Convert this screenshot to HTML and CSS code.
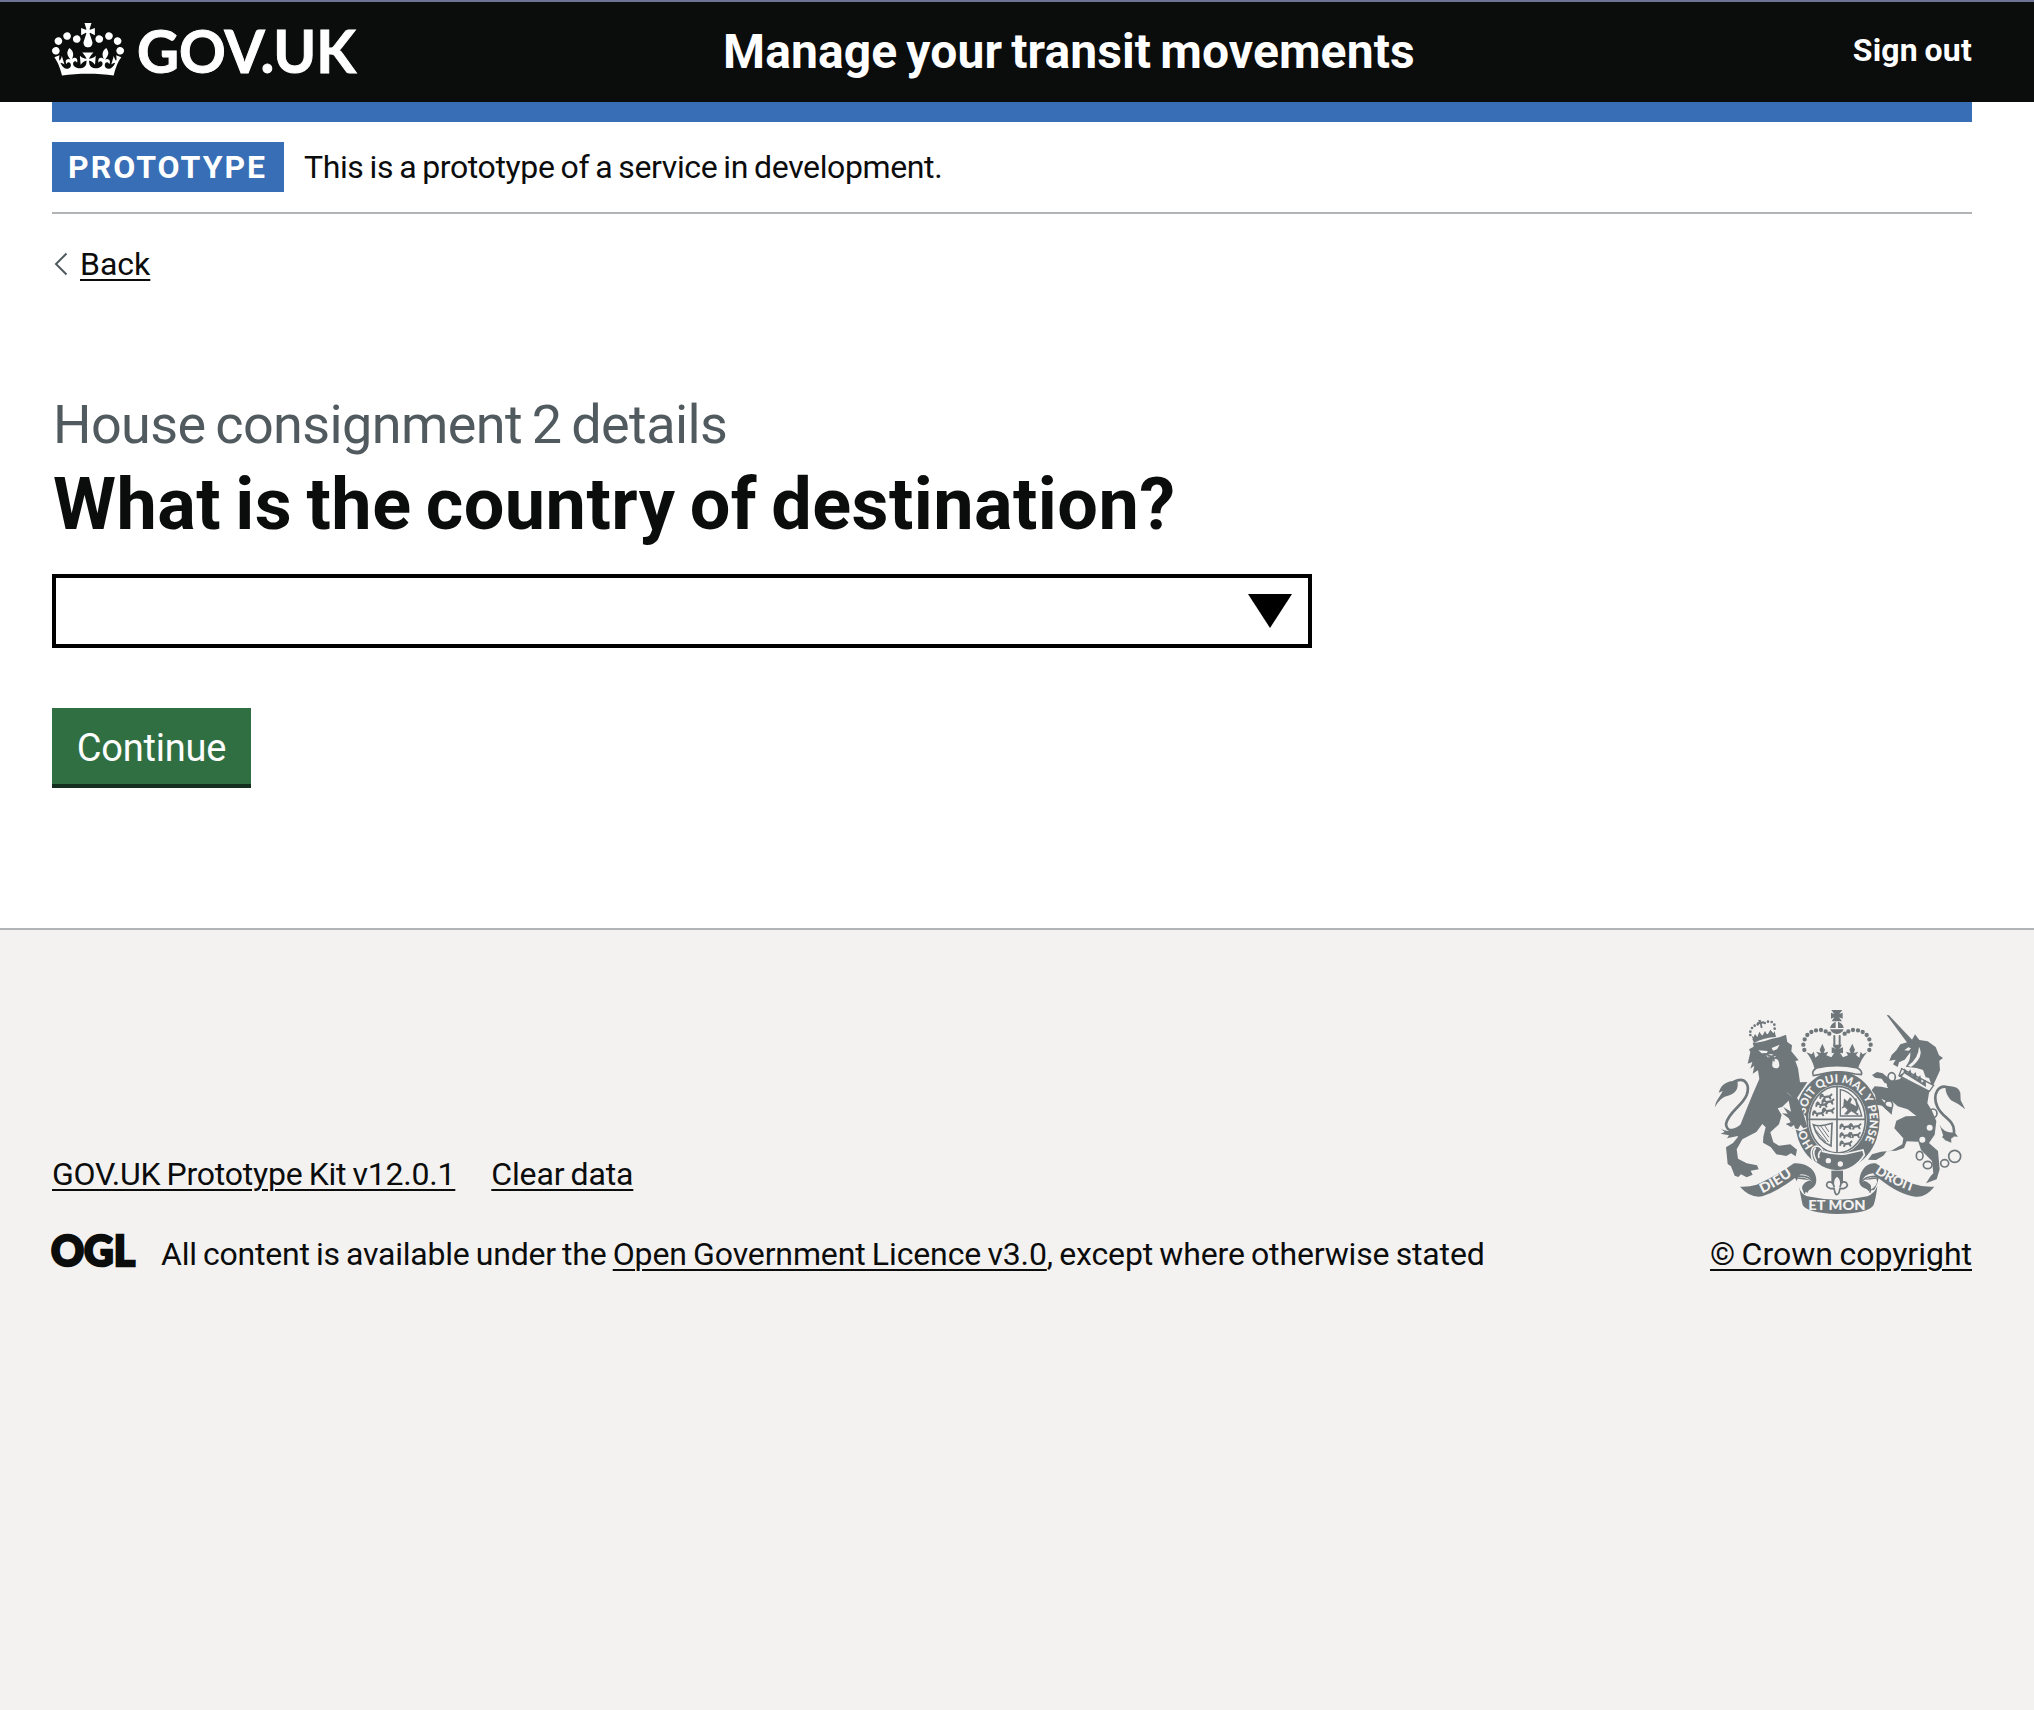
FILE: index.html
```html
<!DOCTYPE html>
<html lang="en">
<head>
<meta charset="utf-8">
<title>What is the country of destination? - Manage your transit movements</title>
<link rel="stylesheet" href="styles.css">
</head>
<body>
<header class="header">
  <div class="header-inner">
    <a class="logo" href="#" aria-label="GOV.UK">
      <svg class="crown" viewBox="0 0 132 97" width="72" height="53" aria-hidden="true"><path fill="currentColor" fill-rule="evenodd" d="M25 30.2c3.5 1.5 7.7-.2 9.1-3.7 1.5-3.6-.2-7.8-3.9-9.2-3.6-1.4-7.6.3-9.1 3.9-1.4 3.5.3 7.5 3.9 9zM9 39.5c3.6 1.5 7.8-.2 9.2-3.7 1.5-3.6-.2-7.8-3.9-9.1-3.6-1.5-7.6.2-9.1 3.8-1.4 3.5.3 7.5 3.8 9zM4.4 57.2c3.5 1.5 7.7-.2 9.1-3.8 1.5-3.6-.2-7.7-3.9-9.1-3.5-1.5-7.6.3-9.1 3.8-1.4 3.5.3 7.6 3.9 9.1zm38.3-21.4c3.5 1.5 7.7-.2 9.1-3.8 1.5-3.6-.2-7.7-3.9-9.1-3.6-1.5-7.6.3-9.1 3.8-1.3 3.6.4 7.7 3.9 9.1zm64.4-5.6c-3.6 1.5-7.8-.2-9.1-3.7-1.5-3.6.2-7.8 3.8-9.2 3.6-1.4 7.7.3 9.2 3.9 1.3 3.5-.4 7.5-3.9 9zm15.9 9.3c-3.6 1.5-7.7-.2-9.1-3.7-1.5-3.6.2-7.8 3.7-9.1 3.6-1.5 7.7.2 9.2 3.8 1.5 3.5-.3 7.5-3.8 9zm4.7 17.7c-3.6 1.5-7.8-.2-9.2-3.8-1.5-3.6.2-7.7 3.9-9.1 3.6-1.5 7.7.3 9.2 3.8 1.3 3.5-.4 7.6-3.9 9.1zM89.3 35.8c-3.6 1.5-7.8-.2-9.2-3.8-1.4-3.6.2-7.7 3.9-9.1 3.6-1.5 7.7.3 9.2 3.8 1.4 3.6-.3 7.7-3.9 9.1zM69.7 17.7l8.9 4.7V9.3l-8.9 2.8c-.2-.3-.5-.6-.9-.9L72.4 0H59.6l3.5 11.2c-.3.3-.6.5-.9.9l-8.8-2.8v13.1l8.8-4.7c.3.3.6.7.9.9l-5 15.4v.1c-.2.8-.4 1.6-.4 2.4 0 4.1 3.1 7.5 7 8.1h.2c.3 0 .7.1 1 .1.4 0 .7 0 1-.1h.2c4-.6 7.1-4.1 7.1-8.1 0-.8-.1-1.7-.4-2.4V34l-5.1-15.4c.4-.2.7-.6 1-.9zM66 92.8c16.9 0 32.8 1.1 47.1 3.2 4-16.9 8.9-26.7 14-33.5l-9.6-3.4c1 4.9 1.1 7.2 0 10.2-1.5-1.4-3-4.3-4.2-8.7L108.6 76c2.8-2 5-3.2 7.5-3.3-4.4 9.4-10 11.9-13.6 11.2-4.3-.8-6.3-4.6-5.6-7.9 1-4.7 5.7-5.9 8-.5 4.3-8.7-3-11.4-7.6-8.8 7.1-7.2 7.9-13.5 2.1-21.1-8 6.1-8.1 12.3-4.5 20.8-4.7-5.4-12.1-2.5-9.5 6.2 3.4-5.2 7.9-2 7.2 3.1-.6 4.3-6.4 7.8-13.5 7.2-10.3-.9-10.9-8-11.2-13.8 2.5-.5 7.1 1.8 11 7.3L80.2 60c-4.1 4.4-8 5.3-12.3 5.4 1.4-4.4 8-11.6 8-11.6H55.5s6.4 7.2 7.9 11.6c-4.2-.1-8-1-12.3-5.4l1.4 16.4c3.9-5.5 8.5-7.7 10.9-7.3-.3 5.8-.9 12.8-11.1 13.8-7.2.6-12.9-2.9-13.5-7.2-.7-5 3.8-8.3 7.1-3.1 2.7-8.7-4.6-11.6-9.4-6.2 3.7-8.5 3.6-14.7-4.6-20.8-5.8 7.6-5 13.9 2.2 21.1-4.7-2.6-11.9.1-7.7 8.8 2.3-5.5 7.1-4.2 8.1.5.7 3.3-1.3 7.1-5.7 7.9-3.5.7-9-1.8-13.5-11.2 2.5.1 4.7 1.3 7.5 3.3l-4.7-15.4c-1.2 4.4-2.7 7.2-4.3 8.7-1.1-3-.9-5.3 0-10.2l-9.5 3.4c5 6.9 9.9 16.7 14 33.5 14.8-2.1 30.8-3.2 47.7-3.2z"/></svg>
      <svg class="wordmark" width="224" height="60" viewBox="0 0 224 60"><text x="-1" y="51" textLength="219" lengthAdjust="spacingAndGlyphs">GOV.UK</text></svg>
    </a>
    <a class="service-name" href="#">Manage your transit movements</a>
    <a class="sign-out" href="#">Sign out</a>
  </div>
</header>
<div class="container">
  <div class="blue-bar"></div>
  <div class="phase-banner">
    <strong class="tag">PROTOTYPE</strong>
    <span class="phase-text">This is a prototype of a service in development.</span>
  </div>
  <div class="back-row">
    <svg width="16" height="26" viewBox="0 0 16 26" aria-hidden="true"><path d="M14.500 2.500 4 13l10.500 10.500" fill="none" stroke="#505a5f" stroke-width="2"/></svg>
    <a class="link" href="#">Back</a>
  </div>
  <main class="main">
    <h1 class="heading"><span class="caption">House consignment 2 details</span><span class="title">What is the country of destination?</span></h1>
    <div class="combo" role="combobox" aria-label="Country">
      <svg width="44" height="34" viewBox="0 0 44 34" aria-hidden="true"><path d="M0 0h44L22 34z"/></svg>
    </div>
    <button class="button" type="button">Continue</button>
  </main>
</div>
<footer class="footer">
  <div class="footer-inner">
    <div class="meta">
      <div class="footer-links"><a class="link kit" href="#">GOV.UK Prototype Kit v12.0.1</a><a class="link clear" href="#">Clear data</a></div>
      <div class="licence">
        <svg class="ogl" width="82" height="34" viewBox="0 0 82 34"><text x="-1" y="32" textLength="84" lengthAdjust="spacingAndGlyphs">OGL</text></svg>
        <p class="licence-text"><span class="all">All content is available under the </span><a class="link ogl-link" href="#">Open Government Licence v3.0</a><span class="except">, except where otherwise stated</span></p>
      </div>
    </div>
    <div class="copyright">
      <svg class="arms" width="250" height="204" viewBox="48 60 750 612" aria-hidden="true">
        <defs>
          <path id="motto" d="M343 468A97 114 0 1 1 487 468"/>
          <path id="dieu" d="M190 610Q242 586 294 546"/>
          <path id="droit" d="M527 549Q584 588 652 608"/>
          <g id="passant"><path d="M0 6l5-6 6 3 2 5 16-2 7-6 3 4-6 6 3 8-5 1-4-6-9 1-2 6-6-1 2-7-6-1-2 6-5-1z"/></g>
        </defs>
        <!-- lion -->
        <path d="M150 178l14-8-3-12c25 2 45-10 80-16l20-8 4 22 14 10-2 18 22 27-10 2 8 22 6 42 22-1-31 48 24 38 1 52-14 2-14-12-10 12-7-12-16-2 12-9-22-18 14-5-12-20-14 5 12 20-8 28-26 24 9 30 17 10 34-4 20 16-4 20-14-9-14 8-30-5-17-22-23-13 1-18 7-28-10-10-18 24-42 22-17 30 4 28 26 14 31 6 5 12-24 4 6 12-18 8-17-9-8 8-11-4-11-28-10-7-5-50 21-13 14-17 9-40 20-50 16-39 20-46-4-26-16 10 5-24-12 9 6-20-14 5 8-34z"/>
        <g class="light"><path d="M178 181l28 2-2 6-16 1zM218 174l24-10-8 14-12 4zM202 196l14-4 16 5-5 5-9-1-13 1zM222 207q16-3 18 12 4 16-9 16-14-3-11-14zM262 306q32 22 52 72l-7-2q-20-43-45-70z"/></g>
        <path class="line s5" d="M207 197l11 2 13-4M223 202l2 10"/>
        <path d="M160 147q30-15 68-18l3 12q-36 2-66 18zM157 136l6 6 5-10 7 9 6-16 9 13 8-15 7 12 9-16 9 11 5-7v14l-64 16z"/>
        <g class="dots6"><path d="M154 135h0M154 125h0M159 114h0M167 107h0M176 103h0M197 99h0M207 95h0M218 96h0M226 104h0M227 116h0"/></g>
        <path d="M177 91l8-2 1 6 8-2 1 7-7 1 3 12-6 1-2-12-8 2-1-7 6-1z"/>
        <path class="line s8" d="M105 275c36-17 48 13 38 40-14 34-55 51-62 87 2 27 27 23 55-2"/>
        <path d="M48 352c0-18 16-32 23-49l-12 5c8-27 25-36 56-36 5 26-5 38-33 47-18 6-27 20-34 33zM64 415c25 17 52 5 78-20l-22 42-36 8 6-9-25-5 12-5z"/>
        <!-- crown -->
        <path d="M397 60h33l-9 12 10-4v18l-11-4 9 12h-31l8-12-10 4V68l10 4zM393 114q4-15 17-19v19zM417 95q15 4 17 19h-17zM393 118h41q-5 13-20 14-16-2-21-14z"/>
        <path class="line s6" d="M406 138v32M422 138v32"/>
        <g class="dots12"><path d="M316 180h0M313 164h0M317 148h0M325 135h0M337 126h0M351 121h0M366 120h0M380 124h0M391 131h0M511 180h0M515 164h0M511 148h0M503 135h0M491 126h0M477 121h0M462 120h0M448 124h0M437 131h0"/></g>
        <path d="M322 187l16 6 6-8 5 18 10-8-8-10 15 4-4-10 8-18 8 18-4 10 14-4-6 11 15 6 9-14-8 2v-18l12 4-9-12h28l-8 12 11-4v18l-9-2 9 14 15-6-6-11 14 4-4-10 9-18 8 18-4 10 14-4-7 10 10 8 4-18 6 8 13-6q-20 24-27 50-63-23-130 0-8-30-25-50z"/>
        <path class="cushion" d="M353 234q60-14 122 0 16 8 12 20l-18-2q-55-14-110 2l-16 3q-7-14 10-23z"/>
        <!-- garter and shield -->
        <ellipse cx="415" cy="391" rx="127" ry="148"/>
        <ellipse class="light" cx="415" cy="389" rx="88" ry="104"/>
        <text class="motto"><textPath href="#motto" textLength="476" lengthAdjust="spacingAndGlyphs">HONI SOIT QUI MAL Y PENSE</textPath></text>
        <ellipse class="line s5" cx="415" cy="389" rx="84" ry="100"/>
        <path class="line s5" d="M414 289v202M330 388h168"/>
        <use href="#passant" x="362" y="310"/><use href="#passant" x="350" y="334"/><use href="#passant" x="340" y="360"/>
        <use href="#passant" x="368" y="325"/><use href="#passant" x="369" y="352"/>
        <use href="#passant" x="422" y="400"/><use href="#passant" x="422" y="426"/><use href="#passant" x="422" y="451"/>
        <use href="#passant" x="449" y="399"/><use href="#passant" x="447" y="425"/>
        <path class="line s4" d="M424 378v-79q48 9 64 79z"/>
        <path d="M435 325l10 9 8-12 6 5-5 12 18 10-5-24 6 1 6 31-8 10 9 5-5 4-18-12-12 10-10-1 11-13-8-8-12 4 7-9z"/>
        <path class="line s5" d="M343 404q20 8 56-4l-3 68q-42-18-53-64z"/><path class="line s3" d="M356 410l32 45M366 409l23 32M378 408l11 17M350 420l30 35"/>
        <path class="belt" d="M337 490q0-21 16-22 15 2 18 16 34 10 68 8l53-12 4 15q-30 48-82 48-36-2-60-22-15-4-17-31z"/>
        <g class="light"><circle cx="388" cy="512" r="8"/><circle cx="424" cy="522" r="8"/></g>
        <path class="curve-light" d="M350 473q-13 14 3 42M366 482q-10 8-6 22"/>
        <!-- lion's forepaw over the garter -->
        <path class="light" d="M250 350l25-24 45 53 5 35-22 10-56-22z"/>
        <path d="M265 310q40 23 51 70l9 31-12 4-8-11-8 14-9-3-3-10-9 6-16-9 15-5-6-12-20-15 17 1-13-20 23 14-5-24z"/>
        <!-- unicorn -->
        <path d="M563 75l7 1 75 79-17 8z"/>
        <path d="M578 195l14-14 12-18 33-10 11-20 13 17 25 4 24 17 10 25 12 8-11 8 2 29-10 22-13 28-10-27-10-2-8-22-20-6-32-4q16-20 14-43l-17 22-17 8-4 14-14-8 8-14-19 3z"/>
        <path class="light" d="M616 181l12-9 8 3-7 7zM660 170q17 30-24 61l-9-4q32-22 33-57z"/>
        <path class="collar" d="M608 236l96 50-13 18-91-47z"/><path d="M613 248l4-13 9 14 8-11 5 19 11-11 4 20 10-10 4 22 12-9 1 22z"/>
        <path d="M598 258l93 45-6 37 14 22 13 32-5 40-17 25 27 24 5 55-9 30-20 7-12 5 14-22 8-8-4-37-33-33-8-25-35-1-8 20-24 8-28 2-10 13-22 13-24-1 12-16 27-8 31-3 33-19 3-18-27-30 6-23 28-13 32-1-26-20-30-9-17-15-14 1-18-9 17 22 17 5-3 21-13-12-16-15-16-3-5-30-10-13 9-12 20 1 21 5-20-29-20-3-9-8 15-9 17 4 28 23 24-6 18-24z"/>
        <path class="line s8" d="M762 297c-50-24-61 21-47 53 15 33 50 40 50 71 2 23-18 26-31 20"/>
        <path d="M740 290q36-6 44 18l1 23 14 27q-20-17-43-27-19-22-16-41zM722 404q10 25 46 24l9 12-21-1 1 19-20-8z"/>
        <g class="ring"><ellipse cx="578" cy="261" rx="11" ry="13"/><ellipse cx="569" cy="345" rx="12" ry="13"/><ellipse cx="702" cy="370" rx="12" ry="13"/><ellipse cx="662" cy="497" rx="10" ry="13"/><ellipse cx="686" cy="525" rx="13" ry="11"/><ellipse cx="737" cy="520" rx="12" ry="11"/><circle cx="767" cy="499" r="18"/></g>
        <g class="light"><circle cx="692" cy="413" r="9"/><circle cx="670" cy="449" r="9"/><circle cx="558" cy="285" r="6"/></g>
        <!-- scroll and fleur-de-lis -->
        <path d="M123 590q24 2 50-6 62-28 112-64c47-4 72 30 66 58-5 20-24 17-24 30l-15-4q-20-33-24-40-52 40-98 55-37 6-67-29zM706 590q-34 2-62-8-60-26-114-62c-30-5-49 26-49 55 2 22 24 17 27 28l18-4q10-16 13-34 62 50 110 55 30 4 57-30z"/>
        <path class="light" d="M296 563q28-2 46 15-8-25-37-25zM534 562q-26-2-46 16 5-25 34-28zM318 608q-14-12-6-23 7-11 22-14l-39-5q-8 22 23 42zM509 603q12-12 4-20-8-9-22-12l41-5q10 18-23 37z"/>
        <path class="line s5" d="M290 560q38-8 54 18-38 3-27 31M540 560q-36-6-54 17 34 4 27 29"/>
        <path d="M300 590q5 22 25 29 92 20 180 0 21-8 30-31-4 36-11 57-15 25-110 27-90-3-103-27-4-17-11-55z"/>
        <path d="M397 542h35v34h-35z"/><path class="fleur" d="M414 556q-18 17-8 35-7-22-21-13-7 13 10 18l10-1 3 13q5 12 12 0l3-13 10 1q18-6 9-18-14-9-19 13 9-19-9-35z"/>
        <g class="scroll-text"><text><textPath href="#dieu" textLength="106" lengthAdjust="spacingAndGlyphs">DIEU</textPath></text><text x="328" y="661" textLength="172" lengthAdjust="spacingAndGlyphs">ET MON</text><text><textPath href="#droit" textLength="128" lengthAdjust="spacingAndGlyphs">DROIT</textPath></text></g>
      </svg>
      <a class="link crown-link" href="#">© Crown copyright</a>
    </div>
  </div>
</footer>
</body>
</html>
```
FILE: styles.css
```css
* { box-sizing: border-box; }
html { background: #f3f2f1; }
body {
  margin: 0;
  background: #fff;
  color: #0b0c0c;
  font: 32px/50px Roboto, "Liberation Sans", sans-serif;
  word-spacing: -1.5px;
}
a { color: inherit; text-decoration: none; }
svg { display: block; flex: none; }
.link { text-decoration: underline; text-decoration-thickness: 2px; text-underline-offset: 4px; }

.header { height: 102px; border-top: 2px solid #6f7396; background: #0b0c0c; color: #fff; }
.header-inner { display: grid; grid-template-columns: 671px 1fr auto; align-items: center; height: 100px; padding: 0 62px 0 52px; }
.logo { display: flex; align-items: flex-start; gap: 14px; }
.crown { margin-top: 1px; }
.wordmark { overflow: visible; }
.wordmark text { fill: #fff; font: 700 60px Lato, "Liberation Sans", sans-serif; stroke: #fff; stroke-width: 1; word-spacing: 0; }
.service-name { font-size: 48px; font-weight: 700; letter-spacing: .11px; word-spacing: -3px; }
.sign-out { font-weight: 700; letter-spacing: .2px; margin-bottom: 4px; }

.container { margin: 0 62px 0 52px; }
.blue-bar { height: 20px; background: #376eb5; }
.phase-banner { display: flex; gap: 20px; padding: 20px 0; border-bottom: 2px solid #b1b4b6; }
.tag { width: 232px; height: 50px; padding: 0 0 0 16px; line-height: 50px; background: #376eb5; color: #fff; letter-spacing: 2px; }
.phase-text { letter-spacing: -.38px; }
.back-row { display: flex; align-items: center; gap: 12px; margin-top: 25px; }

.main { padding: 106px 0 140px; }
.heading { margin: 0; font-weight: 400; }
.caption, .title { display: block; }
.caption { padding-left: 1px; font-size: 54px; line-height: 60px; color: #505a5f; letter-spacing: -.62px; word-spacing: -3px; }
.title { margin-top: 10px; padding-left: 1px; font-size: 72px; line-height: 80px; font-weight: 700; letter-spacing: .44px; word-spacing: -4px; }
.combo { display: flex; justify-content: flex-end; width: 1260px; height: 74px; margin-top: 29px; padding: 16px; border: 4px solid #000; background: #fff; }
.button { display: block; width: 199px; height: 80px; margin-top: 60px; padding: 4px 0 0; border: 0; border-bottom: 4px solid #142f1d; background: #306f42; color: #fff; font: 38px/72px Roboto, sans-serif; letter-spacing: -.2px; }

.footer { height: 782px; padding: 80px 62px 0 52px; border-top: 2px solid #b1b4b6; background: #f3f2f1; line-height: 40px; }
.footer-inner { display: flex; justify-content: space-between; align-items: flex-end; }
.footer-links { display: flex; gap: 36px; }
.licence { display: flex; gap: 27px; margin-top: 40px; }
.licence-text { margin: 0; white-space: pre; }
.kit { letter-spacing: -.22px; }
.clear { letter-spacing: -.16px; }
.all { letter-spacing: -.22px; }
.ogl-link { letter-spacing: -.13px; }
.except { letter-spacing: -.15px; }
.crown-link { display: block; letter-spacing: 0; }
.ogl { overflow: visible; }
.ogl text { fill: #0b0c0c; stroke: #0b0c0c; stroke-width: 2.5; font: 900 42px Lato, sans-serif; word-spacing: 0; }
.arms { margin: 0 0 20px 5px; fill: #6f777b; word-spacing: 0; }
.arms .light { fill: #f3f2f1; }
.arms .line { fill: none; stroke: #6f777b; stroke-linecap: round; }
.s3 { stroke-width: 3; }
.s4 { stroke-width: 4; }
.s5 { stroke-width: 5; }
.s6 { stroke-width: 6; }
.s8 { stroke-width: 8; }
.dots6, .dots12 { stroke: #6f777b; stroke-linecap: round; stroke-width: 8; }
.dots12 { stroke-width: 13; }
.cushion, .fleur { fill: #f3f2f1; stroke: #6f777b; stroke-width: 5; }
.belt { stroke: #f3f2f1; stroke-width: 5; }
.curve-light { fill: none; stroke: #f3f2f1; stroke-width: 5; }
.collar, .ring { fill: #f3f2f1; stroke: #6f777b; stroke-width: 4; }
.ring { fill: none; stroke-width: 5; }
.motto { fill: #f3f2f1; font: 900 34px Lato, sans-serif; }
.scroll-text { fill: #f3f2f1; font: 900 40px Lato, sans-serif; }
```
